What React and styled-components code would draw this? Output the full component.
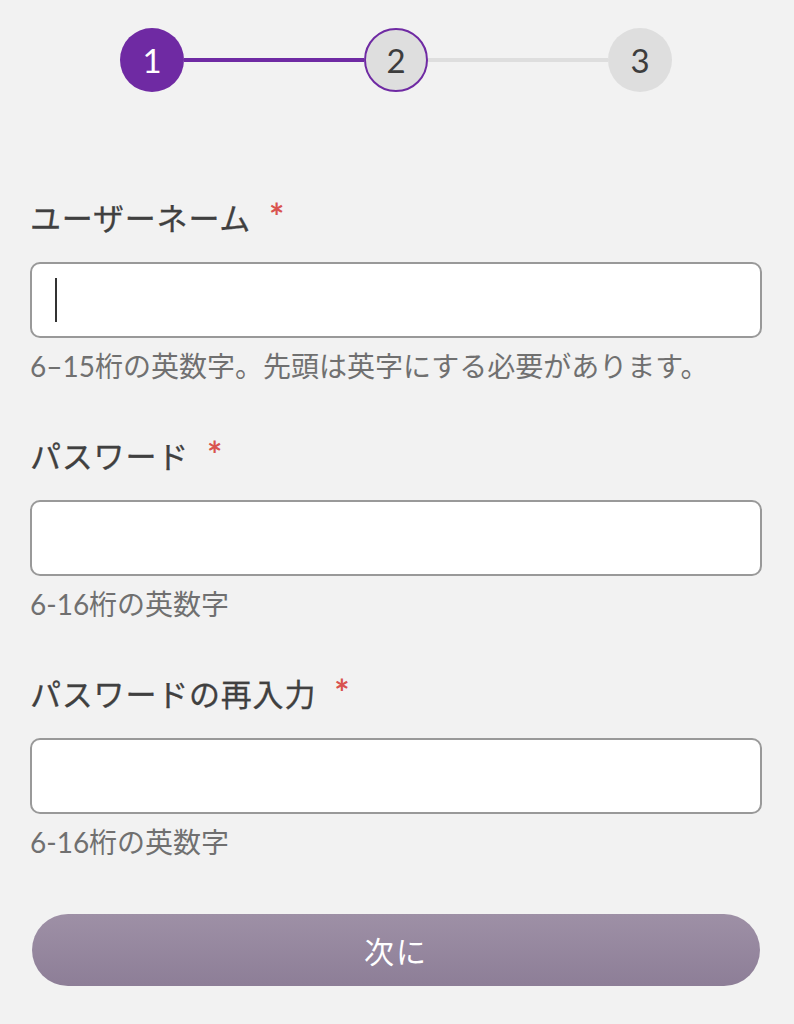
import React from "react";
import styled, { createGlobalStyle } from "styled-components";

const GlobalStyle = createGlobalStyle`
  html, body {
    margin: 0;
    padding: 0;
    background: #f2f2f2;
  }
  body {
    font-family: Lato, "Noto Sans CJK JP", sans-serif;
  }
`;

const Page = styled.div`
  min-height: 1024px;
  background: #f2f2f2;
  padding: 28px 32px 0 30px;
  box-sizing: border-box;
`;

const Stepper = styled.div`
  display: flex;
  align-items: center;
  width: 552px;
  margin: 0 auto 0 90px;
`;

const Step = styled.div`
  width: 64px;
  height: 64px;
  flex: none;
  border-radius: 50%;
  box-sizing: border-box;
  display: flex;
  align-items: center;
  justify-content: center;
  font-size: 33px;
  background: ${({ state }) => (state === "done" ? "#6f2aa3" : "#dedede")};
  color: ${({ state }) => (state === "done" ? "#ffffff" : "#3d3d3d")};
  border: 2px solid ${({ state }) => (state === "current" ? "#6f2aa3" : "transparent")};
`;

const Line = styled.div`
  flex: 1;
  height: 4px;
  background: ${({ active }) => (active ? "#6f2aa3" : "#dedede")};
`;

const Form = styled.form`
  display: flex;
  flex-direction: column;
  margin-top: 104px;
`;

const Field = styled.div`
  display: flex;
  flex-direction: column;
  margin-bottom: 48px;
`;

const Label = styled.label`
  display: block;
  height: 44px;
  font-size: 31px;
  letter-spacing: 0.8px;
  line-height: 44px;
  color: #404040;
  margin-bottom: 22px;
  -webkit-text-stroke: 0.3px #404040;
`;

const Required = styled.span`
  color: #d9534f;
  font-size: 36px;
  font-weight: 700;
  line-height: 0;
  margin-left: 18px;
  -webkit-text-stroke: 0;
`;

const InputWrap = styled.div`
  position: relative;
  display: flex;
  flex-direction: column;
`;

const Input = styled.input`
  height: 76px;
  box-sizing: border-box;
  border: 2px solid #999999;
  border-radius: 10px;
  background: #ffffff;
  padding: 0 24px;
  font-size: 28px;
  font-family: inherit;
  color: #333;
  outline: none;
`;

const Cursor = styled.span`
  position: absolute;
  left: 25px;
  top: 16px;
  width: 2px;
  height: 44px;
  background: #333;
`;

const Hint = styled.div`
  font-size: 28px;
  line-height: 40px;
  color: #707070;
  margin-top: 8px;
`;

const Submit = styled.button`
  margin: 4px 2px 0 2px;
  height: 72px;
  border: none;
  border-radius: 36px;
  background: linear-gradient(180deg, #9e90a6 0%, #8d7e97 100%);
  color: #ffffff;
  font-size: 30px;
  font-family: inherit;
  letter-spacing: 2px;
`;

const fields = [
  { label: "ユーザーネーム", hint: "6–15桁の英数字。先頭は英字にする必要があります。", focused: true },
  { label: "パスワード", hint: "6-16桁の英数字", type: "password" },
  { label: "パスワードの再入力", hint: "6-16桁の英数字", type: "password" },
];

export default function App() {
  return (
    <>
      <GlobalStyle />
      <Page>
        <Stepper>
          <Step state="done">1</Step>
          <Line active />
          <Step state="current">2</Step>
          <Line />
          <Step>3</Step>
        </Stepper>
        <Form onSubmit={(e) => e.preventDefault()}>
          {fields.map((f) => (
            <Field key={f.label}>
              <Label>
                {f.label}
                <Required>*</Required>
              </Label>
              <InputWrap>
                <Input type={f.type || "text"} />
                {f.focused && <Cursor />}
              </InputWrap>
              <Hint>{f.hint}</Hint>
            </Field>
          ))}
          <Submit type="submit">次に</Submit>
        </Form>
      </Page>
    </>
  );
}
